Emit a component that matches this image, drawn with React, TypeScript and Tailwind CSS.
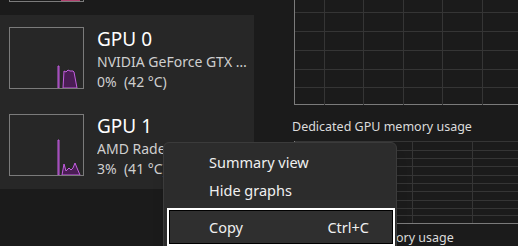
import React from "react";

const font = { fontFamily: '"Segoe UI", "Noto Sans", sans-serif' };

function Spark({ kind }: { kind: "a" | "b" }) {
  // small utilisation graph in the left list
  if (kind === "a") {
    return (
      <svg width="73" height="60" className="absolute left-0 top-0">
        <path d="M48 60 L48 38 L49 38 L49 60 Z" fill="#4a1d55" stroke="#c35ee0" strokeWidth="1" />
        <path d="M53 60 L54 43 L56 44 L58 42 L60 43 L63 43 L64 44 L67 60 Z" fill="#4a1d55" stroke="#c35ee0" strokeWidth="1" />
      </svg>
    );
  }
  return (
    <svg width="73" height="60" className="absolute left-0 top-0">
      <path d="M48 60 L48 25 L49 25 L49 60 Z" fill="#4a1d55" stroke="#c35ee0" strokeWidth="1" />
      <path d="M52 60 L54 49 L56 56 L59 53 L61 55 L63 53 L65 48 L67 53 L70 60 Z" fill="#4a1d55" stroke="#c35ee0" strokeWidth="1" />
    </svg>
  );
}

function GpuRow({ name, model, usage, kind }: { name: string; model: string; usage: string; kind: "a" | "b" }) {
  return (
    <div className="flex h-[87px] items-start pl-[9px] pt-[12px]">
      <div className="relative h-[62px] w-[75px] shrink-0 border border-[#7b7b7b]">
        <Spark kind={kind} />
      </div>
      <div className="ml-[13px] flex min-w-0 flex-col">
        <div className="mt-[-1px] text-[19px] leading-[26px] text-white">{name}</div>
        <div className="w-[153px] truncate text-[14px] leading-[20px] text-[#cfcfcf]">{model}</div>
        <div className="whitespace-pre text-[14px] leading-[20px] text-[#cfcfcf]">{usage}</div>
      </div>
    </div>
  );
}

function Grid({ w, h, xs, ys }: { w: number; h: number; xs: number[]; ys: number[] }) {
  return (
    <svg width={w} height={h} className="absolute left-0 top-0">
      {xs.map((x) => (
        <line key={"x" + x} x1={x + 0.5} y1={0} x2={x + 0.5} y2={h} stroke="#353535" strokeWidth="1" />
      ))}
      {ys.map((y) => (
        <line key={"y" + y} x1={0} y1={y + 0.5} x2={w} y2={y + 0.5} stroke="#353535" strokeWidth="1" />
      ))}
    </svg>
  );
}

export default function App() {
  return (
    <div className="relative flex h-[246px] w-[518px] overflow-hidden bg-[#1b1b1b]" style={font}>
      <div className="flex w-[254px] shrink-0 flex-col">
        <div className="h-[15px] pl-[9px]">
          <div className="relative h-[2px] w-[75px] border-x border-b border-[#7b7b7b]">
            <div className="absolute left-[51px] top-0 h-[1px] w-[19px] bg-[#b0416e]" />
          </div>
        </div>
        <div className="h-[174px] bg-[#272727]">
          <GpuRow name="GPU 0" model="NVIDIA GeForce GTX 1650" usage="0%  (42 °C)" kind="a" />
          <GpuRow name="GPU 1" model="AMD Radeon(TM) Graphics" usage="3%  (41 °C)" kind="b" />
        </div>
      </div>

      <div className="flex flex-1 flex-col">
        <div className="relative ml-[40px] h-[106px] border-b border-l border-[#7b7b7b]">
          <Grid w={224} h={105} xs={[29, 68, 108, 147, 187]} ys={[12, 31, 50, 69, 87]} />
        </div>
        <div className="ml-[38px] mt-[14px] text-[12.5px] leading-[16px] text-[#dcdcdc]">Dedicated GPU memory usage</div>
        <div className="relative ml-[40px] mt-[6px] h-[83px] border-b border-l border-[#7b7b7b]">
          <Grid w={224} h={82} xs={[117, 177]} ys={[0, 9, 17, 25, 34, 42, 50, 59, 67, 74]} />
        </div>
        <div className="ml-[38px] mt-[6px] text-[12.5px] leading-[16px] text-[#dcdcdc]">Shared GPU memory usage</div>
      </div>

      <div className="absolute left-[163px] top-[142px] w-[234px] rounded-[6px] border border-[#3b3b3b] bg-[#2c2c2c] pb-[6px] pt-[6px] shadow-lg">
        <div className="flex h-[28px] items-center pl-[45px] text-[14.5px] text-[#f0f0f0]">Summary view</div>
        <div className="flex h-[28px] items-center pl-[45px] text-[14.5px] text-[#f0f0f0]">Hide graphs</div>
        <div className="ml-[3px] mr-[1px] mt-[3px] h-[38px] border-2 border-white">
          <div className="flex h-full items-center justify-between border border-black bg-[#2f2f2f] pl-[39px] pr-[23px] pt-[2px] text-[14.5px] text-[#f0f0f0]">
            <span>Copy</span>
            <span>Ctrl+C</span>
          </div>
        </div>
      </div>
    </div>
  );
}
